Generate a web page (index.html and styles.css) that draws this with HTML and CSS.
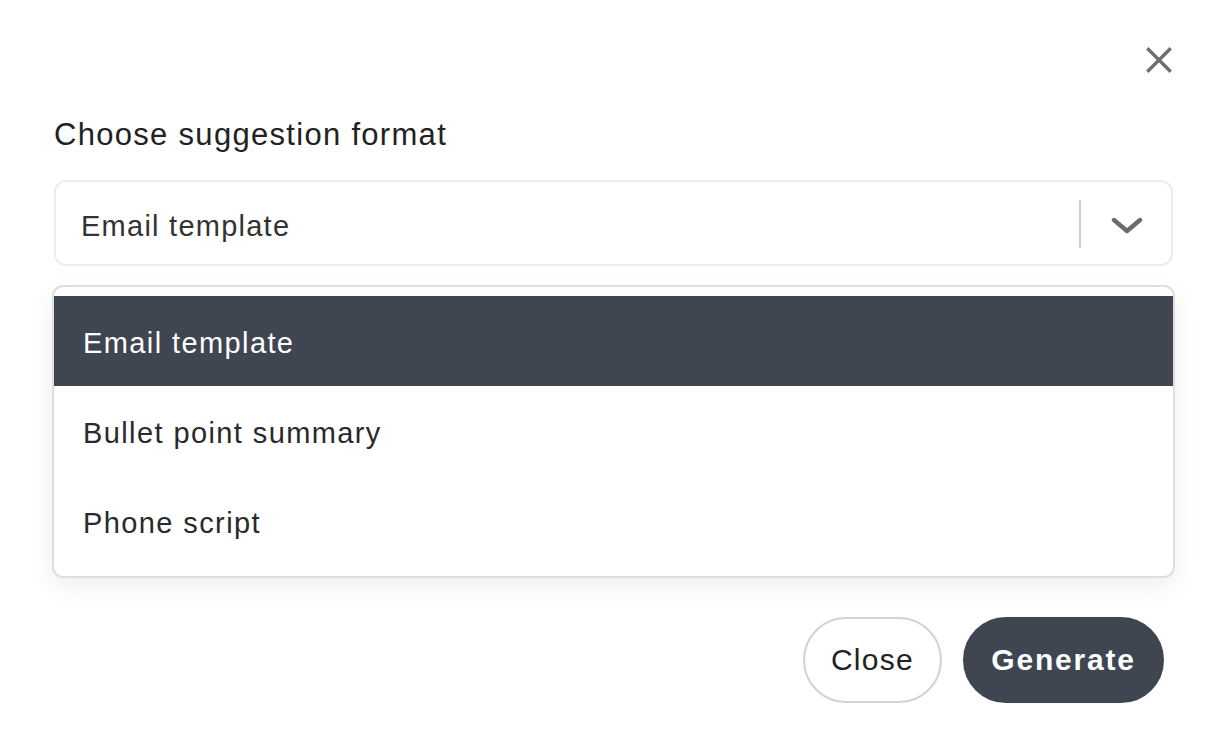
FILE: index.html
```html
<!DOCTYPE html>
<html>
<head>
<meta charset="utf-8">
<link rel="stylesheet" href="styles.css">
</head>
<body>
<div class="modal">
  <div class="top">
    <button class="x-btn" aria-label="Close">
      <svg width="26" height="26" viewBox="0 0 26 26"><path d="M2.5 2.5 L23.5 23.5 M23.5 2.5 L2.5 23.5" stroke="#6f6f6f" stroke-width="3.4" stroke-linecap="square"/></svg>
    </button>
  </div>
  <div class="label">Choose suggestion format</div>
  <div class="select">
    <div class="value">Email template</div>
    <div class="indicators">
      <span class="sep"></span>
      <svg class="chev" width="32" height="18" viewBox="0 0 32 18"><path d="M3 4 L16 15 L29 4" fill="none" stroke="#6b6b6b" stroke-width="4.4" stroke-linecap="round" stroke-linejoin="round"/></svg>
    </div>
  </div>
  <div class="menu">
    <div class="option active">Email template</div>
    <div class="option">Bullet point summary</div>
    <div class="option">Phone script</div>
  </div>
  <div class="actions">
    <button class="btn btn-outline">Close</button>
    <button class="btn btn-dark">Generate</button>
  </div>
</div>
</body>
</html>
```
FILE: styles.css
```css
* { box-sizing: border-box; }
html, body { margin: 0; padding: 0; }
body {
  background: #ffffff;
  font-family: "Liberation Sans", Arial, sans-serif;
  color: #222;
}
.modal {
  width: 1222px;
  height: 732px;
  padding: 0 49px 0 54px;
  display: flex;
  flex-direction: column;
}
.top {
  display: flex;
  justify-content: flex-end;
  padding-top: 47px;
  height: 118px;
  margin-right: 1px;
}
.x-btn {
  background: none;
  border: 0;
  padding: 0;
  width: 26px;
  height: 26px;
  cursor: pointer;
}
.x-btn svg { display: block; }
.label {
  font-size: 31px;
  letter-spacing: 1.3px;
  color: #222;
  line-height: 34px;
  height: 62px;
}
.select {
  height: 86px;
  border: 2px solid #ececec;
  border-radius: 12px;
  display: flex;
  align-items: center;
  padding-left: 25px;
}
.value {
  flex: 1;
  font-size: 29px;
  letter-spacing: 1.25px;
  color: #333;
  margin-top: 7px;
}
.indicators {
  display: flex;
  align-items: center;
  height: 100%;
}
.sep {
  width: 2px;
  height: 48px;
  background: #cfcfcf;
  margin-top: 2px;
}
.chev {
  margin: 4px 28px 0 30px;
  display: block;
}
.menu {
  margin: 19px -2px 0 -2px;
  border: 2px solid #dedede;
  border-radius: 11px;
  padding: 9px 0 10px;
  box-shadow: 0 8px 24px rgba(0,0,0,0.07);
  background: #fff;
}
.option {
  height: 90px;
  display: flex;
  align-items: center;
  padding: 4px 0 0 29px;
  font-size: 29px;
  letter-spacing: 1.4px;
  color: #2a2a2a;
}
.option.active {
  background: #3f4651;
  color: #fff;
}
.actions {
  display: flex;
  justify-content: flex-end;
  gap: 21px;
  margin-top: 39px;
  padding-right: 9px;
}
.btn {
  height: 86px;
  border-radius: 43px;
  font-family: "Liberation Sans", Arial, sans-serif;
  font-size: 30px;
  cursor: pointer;
  padding: 0;
}
.btn-outline {
  width: 139px;
  background: #fff;
  border: 2px solid #d2d2d2;
  color: #222;
  letter-spacing: 1.3px;
}
.btn-dark {
  width: 201px;
  background: #3f4651;
  border: 2px solid #3f4651;
  color: #fff;
  font-weight: bold;
  letter-spacing: 1.8px;
}
```
